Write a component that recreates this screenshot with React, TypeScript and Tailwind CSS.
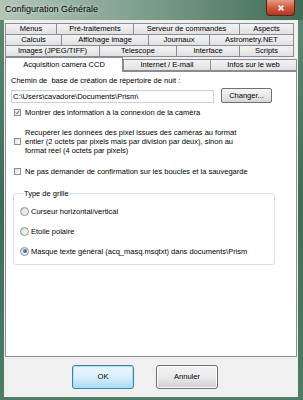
import React from "react";

type Tab = [string, number];

const tabRows: Tab[][] = [
  [["Menus", 52], ["Pré-traitements", 78], ["Serveur de commandes", 107], ["Aspects", 55]],
  [["Calculs", 57], ["Affichage image", 88], ["Journaux", 62], ["Astrometry.NET", 85]],
  [["Images (JPEG/TIFF)", 95], ["Telescope", 78], ["Interface", 64], ["Scripts", 55]],
];

const font = { fontFamily: '"Liberation Sans", Arial, sans-serif' };

function TabBtn({ label, width }: { label: string; width: number }) {
  return (
    <div
      style={{ width }}
      className="h-full flex items-center justify-center border border-[#898c95] -ml-px first:ml-0 bg-gradient-to-b from-[#f3f3f3] to-[#e1e1e1] text-[7.5px] leading-none text-black whitespace-nowrap"
    >
      {label}
    </div>
  );
}

function Checkbox({ checked }: { checked?: boolean }) {
  return (
    <div className="w-[7px] h-[7px] shrink-0 border border-[#8e8f8f] bg-gradient-to-br from-[#e3e3e3] to-[#fafafa] flex items-center justify-center">
      {checked && (
        <svg viewBox="0 0 7 7" className="w-[7px] h-[7px]">
          <path d="M1.2 3.6 L2.8 5.3 L5.9 1.1" stroke="#2a4f9e" strokeWidth="1.3" fill="none" />
        </svg>
      )}
    </div>
  );
}

function Radio({ checked }: { checked?: boolean }) {
  return (
    <div className="w-[9px] h-[9px] shrink-0 rounded-full border border-[#8e8f8f] bg-gradient-to-br from-[#d9d9d9] to-[#fbfbfb] flex items-center justify-center">
      {checked && <div className="w-[4px] h-[4px] rounded-full bg-gradient-to-br from-[#6aa0d8] to-[#1d4f8c]" />}
    </div>
  );
}

export default function App() {
  return (
    <div
      style={font}
      className="w-[303px] h-[400px] flex flex-col bg-gradient-to-b from-[#5f8b76] via-[#3f6c57] to-[#4d7d66] overflow-hidden"
    >
      {/* title bar */}
      <div className="h-[20px] flex items-start justify-between bg-gradient-to-r from-[#b3c6ba] via-[#7b9c8a] to-[#3e6c56]">
        <span className="pl-[5px] pt-[5px] text-[9px] leading-none text-black [text-shadow:0_0_4px_#e8f0ea]">
          Configuration Générale
        </span>
        <div className="mr-[8px] w-[29px] h-[16px] rounded-b-[4px] border border-t-0 border-[#5a2418] bg-gradient-to-b from-[#e79a86] via-[#cf5a3f] to-[#b8321c] flex items-center justify-center">
          <svg viewBox="0 0 10 10" className="w-[8px] h-[8px]">
            <path d="M2 2 L8 8 M8 2 L2 8" stroke="#ffffff" strokeWidth="2" />
          </svg>
        </div>
      </div>

      {/* client area */}
      <div className="ml-[4px] mr-[5px] h-[377px] bg-[#f0f0f0] pt-[3px] pl-[1px] flex flex-col">
        {tabRows.map((row, i) => (
          <div key={i} className="h-[12px] flex -mb-px last:mb-0">
            {row.map(([l, w]) => (
              <TabBtn key={l} label={l} width={w} />
            ))}
          </div>
        ))}
        <div className="h-[14px] flex items-end mt-px">
          <div className="relative z-10 w-[118px] h-[15px] -mb-px bg-white border border-b-0 border-[#898c95] flex items-center justify-center text-[7.5px] leading-none text-black">
            Acquisition camera CCD
          </div>
          <div className="h-[12px] flex">
            <TabBtn label="Internet / E-mail" width={88} />
            <TabBtn label="Infos sur le web" width={87} />
          </div>
        </div>

        {/* page */}
        <div className="w-[292px] h-[286px] bg-white border border-[#898c95] pl-[5px] pt-[4px] text-[7.5px] leading-[9px] text-black">
          <div>Chemin de&nbsp; base de création de répertoire de nuit :</div>
          <div className="flex items-start mt-[3px]">
            <div className="mt-[2px] w-[203px] h-[13px] border border-[#c9cfd6] px-[1px] flex items-center leading-none">
              C:\Users\cavadore\Documents\Prism\
            </div>
            <div className="ml-[7px] w-[51px] h-[15px] rounded-[2px] border border-[#707070] bg-gradient-to-b from-[#f4f4f4] via-[#eaeaea] to-[#d6d6d6] flex items-center justify-center leading-none">
              Changer...
            </div>
          </div>
          <div className="flex items-center h-[9px] mt-[5px] pl-[3px] gap-[4px]">
            <Checkbox checked />
            <span>Montrer des information à la connexion de la caméra</span>
          </div>
          <div className="flex items-center mt-[11px] pl-[3px] gap-[4px]">
            <Checkbox />
            <span>
              Recupérer les données des pixel issues des caméras au format
              <br />
              entier (2 octets par pixels mais par division par deux), sinon au
              <br />
              format réel (4 octets par pixels)
            </span>
          </div>
          <div className="flex items-center h-[9px] mt-[12px] pl-[3px] gap-[4px]">
            <Checkbox />
            <span>Ne pas demander de confirmation sur les boucles et la sauvegarde</span>
          </div>

          <fieldset className="ml-[2px] mt-[13px] w-[262px] border border-[#d5dfe5] rounded-[3px] pl-[6px] pb-[8px] pt-[8px] flex flex-col gap-[10px]">
            <legend className="ml-[3px] px-[1px] leading-[9px]">Type de grille</legend>
            <div className="flex items-center h-[10px] gap-[2px]">
              <Radio />
              <span>Curseur horizontal/vertical</span>
            </div>
            <div className="flex items-center h-[10px] gap-[2px]">
              <Radio />
              <span>Etoile polaire</span>
            </div>
            <div className="flex items-center h-[10px] gap-[2px]">
              <Radio checked />
              <span>Masque texte général (acq_masq.msqtxt) dans documents\Prism</span>
            </div>
          </fieldset>
        </div>

        {/* buttons */}
        <div className="flex mt-[8px] pl-[67px] gap-[22px] text-[7.5px] leading-none text-black">
          <div className="w-[62px] h-[24px] rounded-[3px] border border-[#3c7fb1] bg-gradient-to-b from-[#eaf6fd] via-[#d9f0fc] to-[#a7d9f5] shadow-[inset_0_0_0_1px_#a5e3fb] flex items-center justify-center">
            OK
          </div>
          <div className="w-[62px] h-[24px] rounded-[3px] border border-[#707070] bg-gradient-to-b from-[#f2f2f2] via-[#ebebeb] to-[#cfcfcf] shadow-[inset_0_0_0_1px_#fcfcfc] flex items-center justify-center">
            Annuler
          </div>
        </div>
      </div>
    </div>
  );
}
